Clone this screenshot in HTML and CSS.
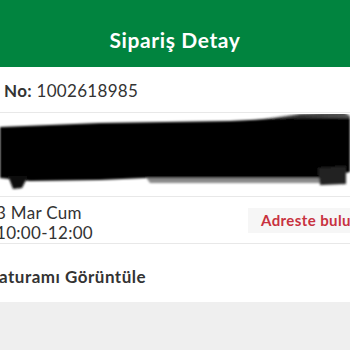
FILE: index.html
```html
<!DOCTYPE html>
<html lang="tr">
<head>
<meta charset="utf-8">
<link rel="stylesheet" href="styles.css">
</head>
<body>
<div class="page">
  <header class="topbar"><h1 class="title">Sipariş Detay</h1></header>
  <section class="row order-no"><span class="shift"><b>No:</b> 1002618985</span></section>
  <section class="row address">
    <svg class="redact" width="350" height="82" viewBox="0 114 350 82" preserveAspectRatio="none">
      <defs>
        <linearGradient id="topg" x1="0" y1="0" x2="1" y2="0">
          <stop offset="0" stop-color="#000" stop-opacity="0"/>
          <stop offset="0.6" stop-color="#333"/>
          <stop offset="1" stop-color="#555"/>
        </linearGradient>
        <filter id="soft"><feGaussianBlur stdDeviation="1.2"/></filter>
      </defs>
      <g filter="url(#soft)">
        <polygon points="225,124 300,114 344,112 350,116 350,128 225,128" fill="url(#topg)"/>
        <polygon points="145,176 320,172 322,183 150,183" fill="#8a8a8a"/>
        <polygon points="0,127 100,123 230,121 290,118 350,118 350,172 320,178 145,178 100,180 30,181 0,178" fill="#000"/>
        <polygon points="8,176 28,176 22,188 13,189" fill="#111"/>
        <polygon points="318,168 346,166 346,184 320,185" fill="#222"/>
      </g>
    </svg>
  </section>
  <section class="row delivery">
    <div class="slot">3 Mar Cum<br>10:00-12:00</div>
    <span class="status">Adreste bulunamadı</span>
  </section>
  <section class="row invoice"><span class="invoice-text">Faturamı Görüntüle</span></section>
</div>
</body>
</html>
```
FILE: styles.css
```css
html, body {
  margin: 0;
  padding: 0;
}
body {
  width: 350px;
  height: 350px;
  overflow: hidden;
  background: #efefef;
  font-family: Lato, "Open Sans", sans-serif;
  color: #333;
}
.page {
  display: flex;
  flex-direction: column;
}
.topbar {
  height: 67px;
  background: #01843f;
  display: flex;
  align-items: center;
  justify-content: center;
}
.title {
  margin: 0;
  padding-top: 11px;
  color: #fff;
  font-size: 21px;
  font-weight: 700;
  letter-spacing: 0.6px;
}
.row {
  background: #fff;
  border-bottom: 1px solid #e8e8e8;
  display: flex;
  align-items: center;
  white-space: nowrap;
}
.order-no {
  height: 46px;
  font-size: 17px;
  letter-spacing: 0.3px;
  padding-left: 4px;
  padding-top: 2px;
  box-sizing: border-box;
}
.order-no b {
  font-weight: 700;
}
.address {
  height: 83px;
  overflow: hidden;
}
.redact {
  display: block;
}
.delivery {
  height: 46px;
  justify-content: space-between;
}
.slot {
  margin-left: -4px;
  font-size: 17px;
  line-height: 20px;
  letter-spacing: 0.3px;
  padding-top: 5px;
}
.status {
  margin-right: -118px;
  background: #f6f6f6;
  color: #c8323f;
  font-size: 15px;
  font-weight: 700;
  letter-spacing: 0.4px;
  height: 25px;
  line-height: 25px;
  padding: 0 13px;
  width: 220px;
  box-sizing: border-box;
}
.invoice {
  height: 58px;
  border-bottom: none;
}
.invoice-text {
  margin-left: -10px;
  font-size: 17px;
  font-weight: 700;
  letter-spacing: 0.5px;
  padding-top: 6px;
}
```
